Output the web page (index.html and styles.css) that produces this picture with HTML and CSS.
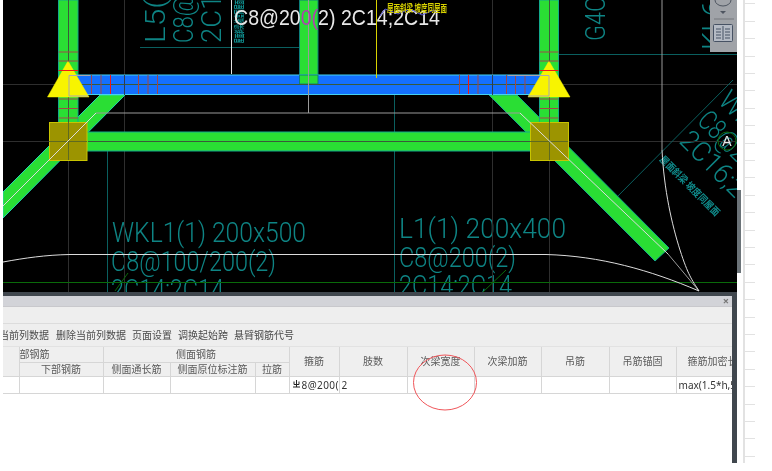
FILE: index.html
```html
<!DOCTYPE html>
<html lang="zh-CN">
<head>
<meta charset="utf-8">
<title>梁平法表格</title>
<link rel="stylesheet" href="styles.css">
</head>
<body>
<div class="screen">
  <div class="margin-left"></div>
  <div class="workspace">
    <svg class="cad" viewBox="3 0 734 292" width="734" height="292" xmlns="http://www.w3.org/2000/svg">
      <rect x="3" y="0" width="734" height="292" fill="#000"/>
      <!-- teal drawing text -->
      <g class="cad-text">
        <text x="112" y="242" textLength="194" lengthAdjust="spacingAndGlyphs">WKL1(1) 200x500</text>
        <text x="111" y="271" textLength="165" lengthAdjust="spacingAndGlyphs">C8@100/200(2)</text>
        <text x="111" y="299" textLength="113" lengthAdjust="spacingAndGlyphs">2C14;2C14</text>
        <text x="399" y="238" textLength="167" lengthAdjust="spacingAndGlyphs">L1(1) 200x400</text>
        <text x="399" y="267" textLength="117" lengthAdjust="spacingAndGlyphs">C8@200(2)</text>
        <text x="399" y="295" textLength="113" lengthAdjust="spacingAndGlyphs">2C14;2C14</text>
        <text transform="translate(165 43) rotate(-90)" textLength="72" lengthAdjust="spacingAndGlyphs">L5(1)</text>
        <text transform="translate(193 43) rotate(-90)" textLength="84" lengthAdjust="spacingAndGlyphs">C8@200</text>
        <text transform="translate(221 43) rotate(-90)" textLength="84" lengthAdjust="spacingAndGlyphs">2C14;2</text>
        <text transform="translate(605 41) rotate(-90)" textLength="70" lengthAdjust="spacingAndGlyphs">G4C14</text>
        <text transform="translate(722 50) rotate(-90)" textLength="84" lengthAdjust="spacingAndGlyphs">KL6(1)</text>
        <text transform="translate(696 122) rotate(45)" textLength="70" lengthAdjust="spacingAndGlyphs">C8@20</text>
        <text transform="translate(678 142) rotate(45)" textLength="98" lengthAdjust="spacingAndGlyphs">2C16;2C</text>
        <text transform="translate(717 102) rotate(45)" textLength="40" lengthAdjust="spacingAndGlyphs">WK</text>
      </g>
      <text class="cad-note" transform="translate(243 43) rotate(-90)" textLength="43" lengthAdjust="spacingAndGlyphs">屋面斜梁 坡度同屋面</text>
      <text class="cad-note" transform="translate(659 160) rotate(45)" textLength="80" lengthAdjust="spacingAndGlyphs">屋面斜梁 坡度同屋面</text>

      <!-- thin construction lines -->
      <line class="grid-line" x1="3" y1="84.5" x2="737" y2="84.5"/>
      <line class="grid-line" x1="3" y1="141.5" x2="737" y2="141.5"/>
      <line class="grid-line" x1="124.5" y1="0" x2="124.5" y2="292"/>
      <line class="grid-line" x1="492.5" y1="0" x2="492.5" y2="292"/>
      <line class="grid-line" x1="68.5" y1="0" x2="68.5" y2="292"/>
      <line class="grid-line" x1="549.5" y1="0" x2="549.5" y2="292"/>
      <line class="teal-line" x1="140" y1="47.5" x2="299" y2="47.5"/>
      <line class="teal-line" x1="559" y1="54.5" x2="737" y2="54.5"/>
      <line class="teal-line" x1="107.5" y1="139" x2="107.5" y2="292"/>
      <line class="teal-line" x1="394.5" y1="85" x2="394.5" y2="292"/>
      <line class="teal-line" x1="733" y1="80" x2="615" y2="199"/>
      <line class="green-line" x1="3" y1="282.5" x2="737" y2="282.5"/>
      <line class="green-line" x1="128" y1="273" x2="115" y2="291"/>
      <line class="green-line" x1="506" y1="270" x2="483" y2="292"/>

      <!-- green members -->
      <polygon class="beam-diag" points="3,192 100,95 125,95 3,218"/>
      <polygon class="beam" points="489,95 517,95 669,248 655,261"/>
      <rect class="beam-h" x="80" y="132" width="455" height="19"/>
      <rect class="beam-v" x="58.5" y="0" width="19.5" height="124"/>
      <rect class="beam-v" x="539.5" y="0" width="19" height="124"/>
      <rect class="beam-mid" x="299.5" y="0" width="18.5" height="84"/>
      <line class="dark-line" x1="68.5" y1="0" x2="68.5" y2="160"/>
      <line class="dark-line" x1="549.5" y1="0" x2="549.5" y2="160"/>
      <line class="dark-line" x1="88" y1="141.5" x2="530" y2="141.5"/>

      <!-- blue beam -->
      <rect class="beam-blue" x="68.5" y="75" width="480" height="19.5"/>
      <rect class="beam-mid-top" x="299.5" y="75" width="18.5" height="9"/>
      <line class="dark-line" x1="68.5" y1="84.5" x2="549" y2="84.5"/>
      <line class="grid-over" x1="124.5" y1="75" x2="124.5" y2="95"/>
      <line class="grid-over" x1="492.5" y1="75" x2="492.5" y2="95"/>
      <g class="stirrup-soft">
        <line x1="91.5" y1="75" x2="91.5" y2="94"/><line x1="101" y1="75" x2="101" y2="94"/>
        <line x1="138.5" y1="75" x2="138.5" y2="94"/><line x1="148" y1="75" x2="148" y2="94"/><line x1="157.5" y1="75" x2="157.5" y2="94"/>
        <line x1="478" y1="75" x2="478" y2="94"/>
        <line x1="515.5" y1="75" x2="515.5" y2="94"/><line x1="525" y1="75" x2="525" y2="94"/>
        <line x1="459.5" y1="75" x2="459.5" y2="94"/><line x1="506.5" y1="75" x2="506.5" y2="94"/>
      </g>
      <g class="stirrup">
        <line x1="110.5" y1="75" x2="110.5" y2="94"/>
        <line x1="468.5" y1="75" x2="468.5" y2="94"/>
      </g>

      <!-- triangles -->
      <polygon class="support" points="68,61 47.5,97 89,97"/>
      <polygon class="support" points="549,61 528,97 570,97"/>
      <path class="inner-edge" d="M90 75.5H69V96H88"/>
      <path class="inner-edge" d="M508 75.5H549V96H528"/>
      <g class="stirrup-soft">
        <line x1="58.5" y1="52" x2="78" y2="52"/><line x1="58.5" y1="61" x2="78" y2="61"/>
        <line x1="58.5" y1="99" x2="78" y2="99"/><line x1="58.5" y1="108.5" x2="78" y2="108.5"/><line x1="58.5" y1="118" x2="78" y2="118"/>
        <line x1="539.5" y1="52" x2="558.5" y2="52"/><line x1="539.5" y1="61" x2="558.5" y2="61"/>
        <line x1="539.5" y1="99" x2="558.5" y2="99"/><line x1="539.5" y1="108.5" x2="558.5" y2="108.5"/><line x1="539.5" y1="118" x2="558.5" y2="118"/>
      </g>
      <g class="stirrup">
        <line x1="58.5" y1="70.5" x2="78" y2="70.5"/>
        <line x1="539.5" y1="70.5" x2="558.5" y2="70.5"/>
      </g>

      <!-- column squares -->
      <rect class="column" x="49.5" y="122.5" width="37.5" height="38"/>
      <rect class="column" x="530.5" y="122.5" width="38" height="38"/>
      <line class="dark-olive" x1="68.5" y1="122" x2="68.5" y2="160"/>
      <line class="dark-olive" x1="49" y1="141.5" x2="87" y2="141.5"/>
      <line class="dark-olive" x1="549.5" y1="122" x2="549.5" y2="160"/>
      <line class="dark-olive" x1="530" y1="141.5" x2="568" y2="141.5"/>

      <!-- white / gray axis lines -->
      <line class="white-line" x1="231.5" y1="0" x2="231.5" y2="74"/>
      <line class="gray-line" x1="308.5" y1="0" x2="308.5" y2="113"/>
      <polyline class="light-line" points="3,206 96,113"/>
      <polyline class="gray-line" points="96,113 520,113"/>
      <polyline class="light-line" points="520,113 668,254"/>
      <line class="gray-line" x1="668" y1="254" x2="699" y2="291"/>
      <line class="yellow-line" x1="376.5" y1="0" x2="376.5" y2="78"/>
      <line class="gray-line" x1="662" y1="0" x2="662" y2="150"/>
      <path class="light-line" d="M662 150C664 190 672 225 680 250S692 280 699 291"/>
      <path class="light-line" d="M3 262C25 258 45 255 70 254.5H546C600 256 650 270 699 291"/>

      <!-- drawn labels in white and yellow -->
      <text class="cad-main" x="234" y="25" textLength="206" lengthAdjust="spacingAndGlyphs">C8@20<tspan class="cad-magenta">0(</tspan>2) 2C14;2C14</text>
      <polyline class="blue-mark" points="380,16 385,9 398,14 410,9 422,15 434,10 438,14"/>
      <text class="cad-yellow" x="387" y="12" textLength="60" lengthAdjust="spacingAndGlyphs">屋面斜梁 坡度同屋面</text>

      <!-- axis bubble -->
      <circle class="bubble" cx="727" cy="141" r="9"/>
      <text class="bubble-text" x="727" y="146" text-anchor="middle">A</text>

      <!-- floating tool strip -->
      <rect class="strip" x="710" y="0" width="27" height="52"/>
      <path class="strip-mark" d="M715 0a8 6 0 0 0 16 0" fill="none"/>
      <polygon class="strip-arrow" points="720,11 726,11 723,14"/>
      <rect class="strip-rule" x="714" y="18" width="20" height="2"/>
      <rect class="strip-icon" x="713.5" y="24.5" width="19" height="17" rx="1"/>
      <path class="strip-icon-lines" d="M723 26v14M716 29h5M716 32h5M716 35h5M716 38h5M725 29h5M725 32h5M725 35h5M725 38h5"/>
    </svg>

    <section class="panel">
      <div class="panel-title">
        <span class="panel-close">×</span>
      </div>
      <div class="panel-band"></div>
      <div class="panel-tools">
        <span class="tool tool-cut">当前列数据</span>
        <span class="tool">删除当前列数据</span>
        <span class="tool">页面设置</span>
        <span class="tool">调换起始跨</span>
        <span class="tool">悬臂钢筋代号</span>
      </div>
      <table class="rebar">
        <colgroup>
          <col class="c16"><col class="c84"><col class="c67"><col class="c85"><col class="c34"><col class="c50">
          <col class="c68"><col class="c67"><col class="c67"><col class="c68"><col class="c67"><col class="c56">
        </colgroup>
        <thead>
          <tr class="head-top">
            <th rowspan="2"></th>
            <th class="left-cut">部钢筋</th>
            <th colspan="3">侧面钢筋</th>
            <th rowspan="2">箍筋</th>
            <th rowspan="2">肢数</th>
            <th rowspan="2">次梁宽度</th>
            <th rowspan="2">次梁加筋</th>
            <th rowspan="2">吊筋</th>
            <th rowspan="2">吊筋锚固</th>
            <th rowspan="2" class="left-clip">箍筋加密长度</th>
          </tr>
          <tr class="head-sub">
            <th>下部钢筋</th>
            <th>侧面通长筋</th>
            <th>侧面原位标注筋</th>
            <th>拉筋</th>
          </tr>
        </thead>
        <tbody>
          <tr class="data-row">
            <td></td><td></td><td></td><td></td><td></td>
            <td class="stirrup-cell"><svg class="bar-glyph" viewBox="0 0 7 8" width="7" height="8"><path d="M3.500 0V7M1 1.500V4.500H6V1.500M0 7H7" fill="none" stroke="#222" stroke-width="1"/></svg>8@200(</td>
            <td>2</td><td></td><td></td><td></td><td></td>
            <td>max(1.5*h,5</td>
          </tr>
        </tbody>
      </table>
      <svg class="red-ring" viewBox="0 0 66 57" width="66" height="57" xmlns="http://www.w3.org/2000/svg">
        <ellipse cx="33" cy="28.500" rx="31.500" ry="27.500"/>
      </svg>
    </section>
  </div>
  <aside class="gutter">
    <div class="scroll"><div class="scroll-thumb"></div></div>
    <div class="sheet"></div>
  </aside>
</div>
</body>
</html>
```

FILE: styles.css
```css
* { box-sizing: border-box; }
html, body { margin: 0; padding: 0; background: #fff; }
body { font-family: "Noto Sans", "Noto Sans CJK SC", sans-serif; overflow: hidden; }

.screen { display: flex; width: 772px; height: 471px; background: #fff; }
.margin-left { width: 3px; flex: none; }
.workspace { display: flex; flex-direction: column; width: 734px; height: 463px; flex: none; }
.cad { display: block; flex: none; filter: blur(0.35px); }

.cad-text text { font-family: "Roboto", sans-serif; font-weight: 300; font-size: 28px; fill: #0e8484; }
.cad-note { font-family: "Noto Sans CJK SC", sans-serif; font-size: 10px; fill: #0f8c8c; font-weight: 700; }
.cad-yellow { font-family: "Noto Sans CJK SC", sans-serif; font-size: 10px; fill: #d8d200; font-weight: 700; }
.cad-main { font-family: "Liberation Sans", sans-serif; font-size: 22px; fill: #e8e8e8; }
.cad-magenta { fill: #b040b0; }
.blue-mark { fill: none; stroke: #5a5ad8; stroke-width: 1; }

.grid-line { stroke: #2e2e2e; stroke-width: 1; }
.grid-over { stroke: #2e3c50; stroke-width: 1; }
.dark-line { stroke: #3a5a3a; stroke-width: 1; }
.teal-line { stroke: #0a5f5f; stroke-width: 1; }
.green-line { stroke: #0a6a0a; stroke-width: 1; }
.white-line { stroke: #e4e4e4; stroke-width: 1; }
.gray-line { stroke: #9a9a9a; stroke-width: 1; fill: none; }
.light-line { stroke: #dcdcdc; stroke-width: 1; fill: none; }
.yellow-line { stroke: #d8d200; stroke-width: 1; }

.beam, .beam-h, .beam-v { fill: #2ade34; stroke: #12a98a; stroke-width: 1; }
.beam-diag { fill: #2ade34; stroke: #1fd6b0; stroke-width: 1; }
.beam-mid, .beam-mid-top { fill: #2ade34; stroke: #0c7f7a; stroke-width: 1; }
.beam-blue { fill: #1470ff; stroke: #45d2f0; stroke-width: 1; }
.stirrup line { stroke: #f01818; stroke-width: 1; }
.stirrup-soft line { stroke: #a04848; stroke-width: 1; }
.support { fill: #f8f400; stroke: #f8f400; stroke-width: 0.5; }
.inner-edge { fill: none; stroke: #a8a8b0; stroke-width: 1; }
.column { fill: #9c9400; stroke: #c8c400; stroke-width: 1; }
.dark-olive { stroke: #5f6a20; stroke-width: 1; }

.bubble { fill: none; stroke: #0c6a0c; stroke-width: 1; }
.bubble-text { font-family: "Liberation Sans", sans-serif; font-size: 14px; fill: #e8e8e8; }

.strip { fill: #a0a3a8; }
.strip-mark { stroke: #4e5560; stroke-width: 1; }
.strip-arrow { fill: #4e5560; }
.strip-rule { fill: #8a8d92; }
.strip-icon { fill: #b4bac4; stroke: #475264; stroke-width: 1; }
.strip-icon-lines { fill: none; stroke: #475264; stroke-width: 1; }

.panel {
  position: relative;
  flex: 1;
  display: flex;
  flex-direction: column;
  overflow: hidden;
  border-top: 4px solid #40474e;
  border-right: 5px solid #40474e;
  background: #fff;
  color: #555;
  font-size: 10px;
  filter: blur(0.3px);
}
.panel-title {
  display: flex;
  justify-content: flex-end;
  align-items: center;
  height: 10px;
  padding-right: 3px;
  background: #d2d3d8;
  flex: none;
}
.panel-close { font-size: 11px; line-height: 10px; color: #777; font-weight: 700; }
.panel-band {
  height: 18px;
  flex: none;
  background: #eee;
  border-top: 1px solid #c8c8cc;
  border-bottom: 1px solid #dcdcdc;
}
.panel-tools {
  display: flex;
  align-items: center;
  gap: 6px;
  height: 23px;
  flex: none;
  background: #eee;
  overflow: hidden;
  white-space: nowrap;
  color: #4a4a4a;
  border-bottom: 1px solid #e2e2e2;
}
.tool { flex: none; line-height: 14px; }
.tool-cut { margin-left: -4px; margin-right: 1px; }

.rebar {
  table-layout: fixed;
  width: 729px;
  border-collapse: collapse;
  flex: none;
}
.c16 { width: 16px; } .c34 { width: 34px; } .c50 { width: 50px; } .c56 { width: 56px; }
.c67 { width: 67px; } .c68 { width: 68px; } .c84 { width: 84px; } .c85 { width: 85px; }
.rebar th, .rebar td {
  padding: 0;
  overflow: hidden;
  white-space: nowrap;
  border: 1px solid #d6d6d6;
}
.rebar th {
  background: #efefef;
  font-weight: 400;
  font-size: 10px;
  line-height: 13px;
  text-align: center;
  color: #5a5a5a;
}
.rebar tr > :first-child { border-left: 0; }
.rebar tr > :last-child { border-right: 0; }
.rebar thead tr:first-child th { border-top: 0; }
.head-top { height: 15px; }
.head-sub { height: 14px; }
.rebar .left-cut { text-align: left; }
.rebar .left-clip { text-align: left; padding-left: 11px; }
.data-row { height: 17px; }
.rebar td {
  background: #fff;
  font-size: 10px;
  line-height: 14px;
  color: #333;
  padding-left: 2px;
  text-overflow: clip;
}
.rebar .stirrup-cell { padding-left: 3px; letter-spacing: 0.4px; }
.bar-glyph { vertical-align: 1px; margin-right: 2px; }

.red-ring {
  position: absolute;
  left: 409px;
  top: 58px;
  fill: none;
  stroke: #f0565a;
  stroke-width: 1;
}

.gutter { display: flex; width: 35px; height: 463px; flex: none; }
.scroll { width: 4px; flex: none; padding-top: 190px; }
.scroll-thumb { height: 83px; background: #6b7378; }
.sheet {
  width: 12px;
  margin-left: 2px;
  flex: none;
  border-left: 2px solid #e2e2e2;
  background: repeating-linear-gradient(to bottom, #fff 0, #fff 3.4px, #e2e2e2 3.4px, #e2e2e2 4.4px, #fff 4.4px, #fff 17.4px);
}
```
